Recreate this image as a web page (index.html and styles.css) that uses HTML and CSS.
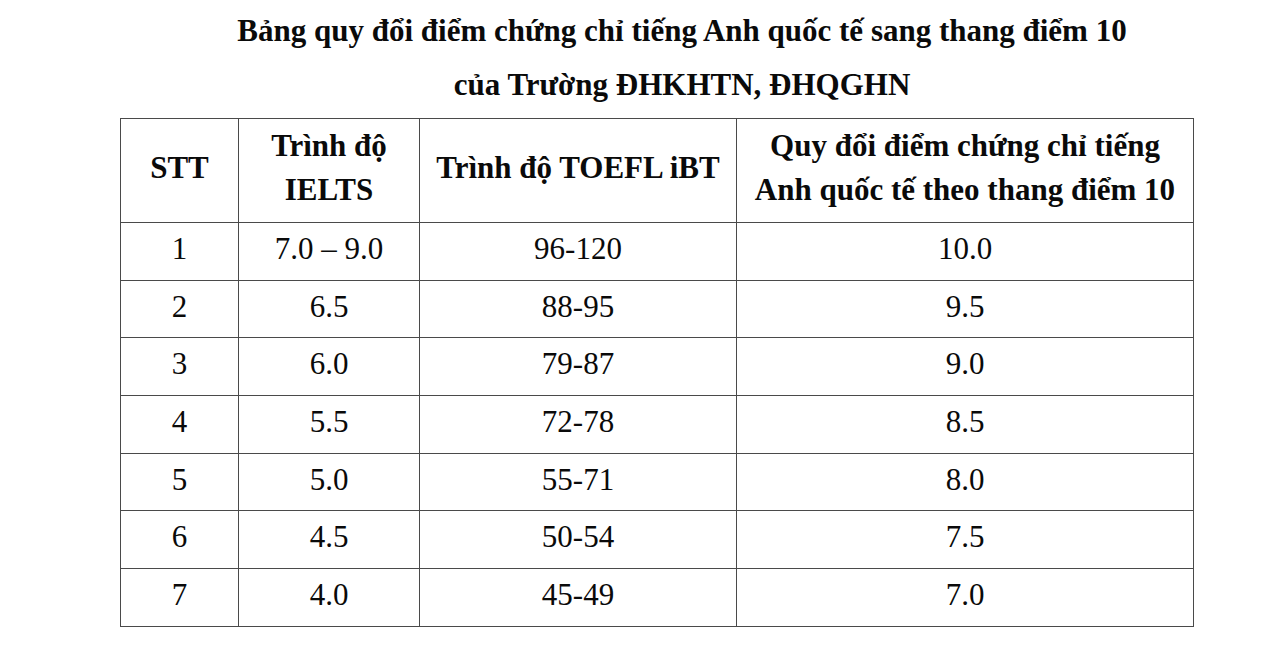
FILE: index.html
```html
<!DOCTYPE html>
<html lang="vi">
<head>
<meta charset="utf-8">
<link rel="stylesheet" href="styles.css">
</head>
<body>
<div class="page">
  <div class="title">
    <div class="title-line">Bảng quy đổi điểm chứng chỉ tiếng Anh quốc tế sang thang điểm 10</div>
    <div class="title-line">của Trường ĐHKHTN, ĐHQGHN</div>
  </div>
  <table class="grid">
    <colgroup>
      <col class="c1"><col class="c2"><col class="c3"><col class="c4">
    </colgroup>
    <thead>
      <tr>
        <th>STT</th>
        <th>Trình độ<br>IELTS</th>
        <th>Trình độ TOEFL iBT</th>
        <th>Quy đổi điểm chứng chỉ tiếng<br>Anh quốc tế theo thang điểm 10</th>
      </tr>
    </thead>
    <tbody>
      <tr><td>1</td><td>7.0 – 9.0</td><td>96-120</td><td>10.0</td></tr>
      <tr><td>2</td><td>6.5</td><td>88-95</td><td>9.5</td></tr>
      <tr><td>3</td><td>6.0</td><td>79-87</td><td>9.0</td></tr>
      <tr><td>4</td><td>5.5</td><td>72-78</td><td>8.5</td></tr>
      <tr><td>5</td><td>5.0</td><td>55-71</td><td>8.0</td></tr>
      <tr><td>6</td><td>4.5</td><td>50-54</td><td>7.5</td></tr>
      <tr><td>7</td><td>4.0</td><td>45-49</td><td>7.0</td></tr>
    </tbody>
  </table>
</div>
</body>
</html>
```

FILE: styles.css
```css
html, body {
  margin: 0;
  padding: 0;
  background: #ffffff;
}
body {
  font-family: "Liberation Serif", "Times New Roman", serif;
  color: #0a0a0a;
  width: 1280px;
  height: 655px;
  overflow: hidden;
}
.page {
  padding-top: 4px;
}
.title {
  padding-left: 84px;
  text-align: center;
  font-weight: bold;
  font-size: 31px;
  line-height: 54px;
}
.grid {
  margin-left: 120px;
  margin-top: 6px;
  width: 1073px;
  border-collapse: collapse;
  table-layout: fixed;
  font-size: 31px;
}
.c1 { width: 118px; }
.c2 { width: 181px; }
.c3 { width: 317px; }
.c4 { width: 457px; }
.grid th, .grid td {
  border: 1.5px solid #4a4a4a;
  text-align: center;
  vertical-align: middle;
  padding: 0;
}
.grid th {
  height: 97px;
  padding-bottom: 6px;
  font-weight: bold;
  line-height: 44px;
}
.grid td {
  height: 51.7px;
  padding-bottom: 5px;
  line-height: 32px;
  font-weight: normal;
}
```
